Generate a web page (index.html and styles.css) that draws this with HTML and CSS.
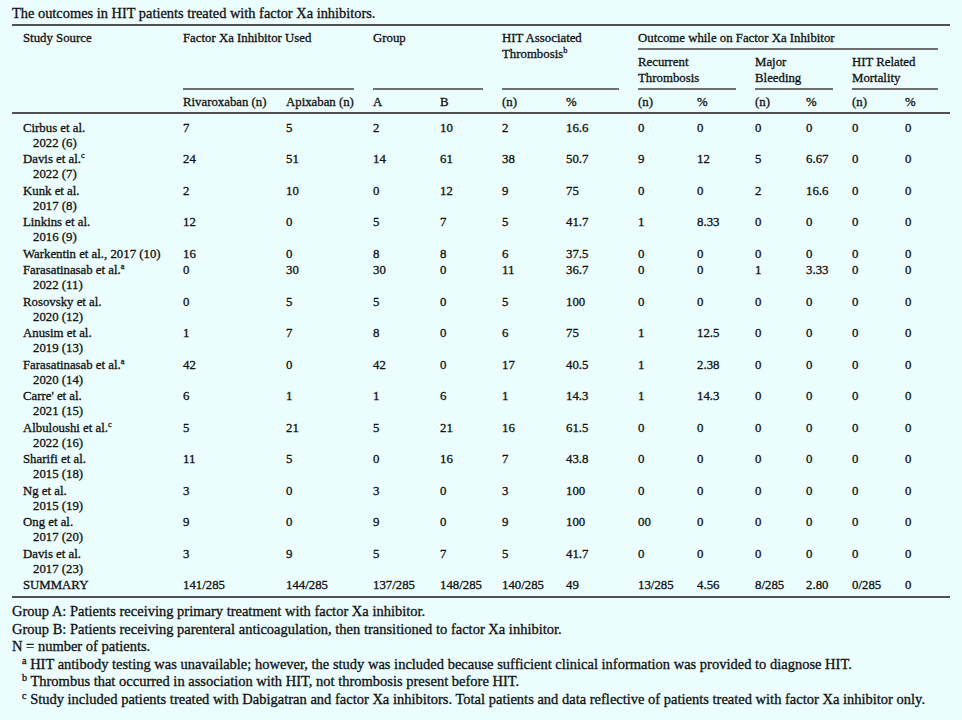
FILE: index.html
```html
<!DOCTYPE html>
<html lang="en">
<head>
<meta charset="utf-8">
<title>Factor Xa inhibitors in HIT</title>
<link rel="stylesheet" href="styles.css">
</head>
<body>
<p class="title">The outcomes in HIT patients treated with factor Xa inhibitors.</p>
<table class="tbl">
  <colgroup>
    <col class="c-study"><col class="c-riva"><col class="c-apix"><col class="c-a"><col class="c-b">
    <col class="c-hn"><col class="c-hp"><col class="c-rn"><col class="c-rp"><col class="c-mn"><col class="c-mp">
    <col class="c-dn"><col class="c-dp">
  </colgroup>
  <thead>
    <tr class="h1">
      <th rowspan="3" class="study">Study Source</th>
      <th colspan="2" rowspan="2" class="grp">Factor Xa Inhibitor Used</th>
      <th colspan="2" rowspan="2" class="grp">Group</th>
      <th colspan="2" rowspan="2" class="grp">HIT Associated<br>Thrombosis<sup>b</sup></th>
      <th colspan="6" class="grp grp-end">Outcome while on Factor Xa Inhibitor</th>
    </tr>
    <tr class="h2">
      <th colspan="2" class="grp">Recurrent<br>Thrombosis</th>
      <th colspan="2" class="grp">Major<br>Bleeding</th>
      <th colspan="2" class="grp grp-end">HIT Related<br>Mortality</th>
    </tr>
    <tr class="h3">
      <th>Rivaroxaban (n)</th><th>Apixaban (n)</th><th>A</th><th>B</th>
      <th>(n)</th><th>%</th><th>(n)</th><th>%</th><th>(n)</th><th>%</th><th>(n)</th><th>%</th>
    </tr>
  </thead>
  <tbody>
    <tr><td class="study">Cirbus et al.<br>2022 (6)</td><td>7</td><td>5</td><td>2</td><td>10</td><td>2</td><td>16.6</td><td>0</td><td>0</td><td>0</td><td>0</td><td>0</td><td>0</td></tr>
    <tr><td class="study">Davis et al.<sup>c</sup><br>2022 (7)</td><td>24</td><td>51</td><td>14</td><td>61</td><td>38</td><td>50.7</td><td>9</td><td>12</td><td>5</td><td>6.67</td><td>0</td><td>0</td></tr>
    <tr><td class="study">Kunk et al.<br>2017 (8)</td><td>2</td><td>10</td><td>0</td><td>12</td><td>9</td><td>75</td><td>0</td><td>0</td><td>2</td><td>16.6</td><td>0</td><td>0</td></tr>
    <tr><td class="study">Linkins et al.<br>2016 (9)</td><td>12</td><td>0</td><td>5</td><td>7</td><td>5</td><td>41.7</td><td>1</td><td>8.33</td><td>0</td><td>0</td><td>0</td><td>0</td></tr>
    <tr><td class="study">Warkentin et al., 2017 (10)</td><td>16</td><td>0</td><td>8</td><td>8</td><td>6</td><td>37.5</td><td>0</td><td>0</td><td>0</td><td>0</td><td>0</td><td>0</td></tr>
    <tr><td class="study">Farasatinasab et al.<sup>a</sup><br>2022 (11)</td><td>0</td><td>30</td><td>30</td><td>0</td><td>11</td><td>36.7</td><td>0</td><td>0</td><td>1</td><td>3.33</td><td>0</td><td>0</td></tr>
    <tr><td class="study">Rosovsky et al.<br>2020 (12)</td><td>0</td><td>5</td><td>5</td><td>0</td><td>5</td><td>100</td><td>0</td><td>0</td><td>0</td><td>0</td><td>0</td><td>0</td></tr>
    <tr><td class="study">Anusim et al.<br>2019 (13)</td><td>1</td><td>7</td><td>8</td><td>0</td><td>6</td><td>75</td><td>1</td><td>12.5</td><td>0</td><td>0</td><td>0</td><td>0</td></tr>
    <tr><td class="study">Farasatinasab et al.<sup>a</sup><br>2020 (14)</td><td>42</td><td>0</td><td>42</td><td>0</td><td>17</td><td>40.5</td><td>1</td><td>2.38</td><td>0</td><td>0</td><td>0</td><td>0</td></tr>
    <tr><td class="study">Carre' et al.<br>2021 (15)</td><td>6</td><td>1</td><td>1</td><td>6</td><td>1</td><td>14.3</td><td>1</td><td>14.3</td><td>0</td><td>0</td><td>0</td><td>0</td></tr>
    <tr><td class="study">Albuloushi et al.<sup>c</sup><br>2022 (16)</td><td>5</td><td>21</td><td>5</td><td>21</td><td>16</td><td>61.5</td><td>0</td><td>0</td><td>0</td><td>0</td><td>0</td><td>0</td></tr>
    <tr><td class="study">Sharifi et al.<br>2015 (18)</td><td>11</td><td>5</td><td>0</td><td>16</td><td>7</td><td>43.8</td><td>0</td><td>0</td><td>0</td><td>0</td><td>0</td><td>0</td></tr>
    <tr><td class="study">Ng et al.<br>2015 (19)</td><td>3</td><td>0</td><td>3</td><td>0</td><td>3</td><td>100</td><td>0</td><td>0</td><td>0</td><td>0</td><td>0</td><td>0</td></tr>
    <tr><td class="study">Ong et al.<br>2017 (20)</td><td>9</td><td>0</td><td>9</td><td>0</td><td>9</td><td>100</td><td>00</td><td>0</td><td>0</td><td>0</td><td>0</td><td>0</td></tr>
    <tr><td class="study">Davis et al.<br>2017 (23)</td><td>3</td><td>9</td><td>5</td><td>7</td><td>5</td><td>41.7</td><td>0</td><td>0</td><td>0</td><td>0</td><td>0</td><td>0</td></tr>
    <tr class="summary"><td class="study">SUMMARY</td><td>141/285</td><td>144/285</td><td>137/285</td><td>148/285</td><td>140/285</td><td>49</td><td>13/285</td><td>4.56</td><td>8/285</td><td>2.80</td><td>0/285</td><td>0</td></tr>
  </tbody>
</table>
<div class="notes">
  <p>Group A: Patients receiving primary treatment with factor Xa inhibitor.</p>
  <p>Group B: Patients receiving parenteral anticoagulation, then transitioned to factor Xa inhibitor.</p>
  <p>N = number of patients.</p>
  <p class="fn"><sup>a</sup> HIT antibody testing was unavailable; however, the study was included because sufficient clinical information was provided to diagnose HIT.</p>
  <p class="fn"><sup>b</sup> Thrombus that occurred in association with HIT, not thrombosis present before HIT.</p>
  <p class="fn"><sup>c</sup> Study included patients treated with Dabigatran and factor Xa inhibitors. Total patients and data reflective of patients treated with factor Xa inhibitor only.</p>
</div>
</body>
</html>
```
FILE: styles.css
```css
html, body {
  margin: 0;
  background: #ebfdfd;
}
body {
  padding: 4px 12px 0;
  color: #111;
  font-family: "Liberation Serif", "Times New Roman", serif;
  -webkit-text-stroke: 0.3px #111;
}
.title {
  margin: 0 0 2px;
  font-size: 14.4px;
  line-height: 18px;
}
.tbl {
  width: 938px;
  table-layout: fixed;
  border-collapse: collapse;
  border-spacing: 0;
  font-size: 12.8px;
  border-top: 2px solid #505050;
}
.c-study { width: 171px; }
.c-riva { width: 103px; }
.c-apix { width: 87px; }
.c-a { width: 67px; }
.c-b { width: 62px; }
.c-hn { width: 64px; }
.c-hp { width: 72px; }
.c-rn { width: 59px; }
.c-rp { width: 58px; }
.c-mn { width: 51px; }
.c-mp { width: 46px; }
.c-dn { width: 53px; }
.c-dp { width: 45px; }

.tbl th {
  font-weight: normal;
  text-align: left;
  vertical-align: top;
  line-height: 16px;
  padding: 0;
}
.tbl thead {
  border-bottom: 2px solid #505050;
}
.tbl th.study {
  padding: 4px 0 0 11px;
}
.h1 th {
  padding-top: 4px;
  padding-bottom: 4px;
}
.h2 th {
  padding-top: 3.5px;
  padding-bottom: 4px;
}
.h3 th {
  padding-top: 4px;
  padding-bottom: 2.5px;
}
.tbl th.grp {
  background: linear-gradient(#707070, #707070) left bottom / calc(100% - 19px) 2px no-repeat;
}
.tbl th.grp-end {
  background-size: calc(100% - 12px) 2px;
}
sup {
  font-size: 0.65em;
  line-height: 0;
  vertical-align: 0.55em;
}

.tbl tbody {
  border-bottom: 2px solid #505050;
}
.tbl td {
  line-height: 15px;
  padding: 0.5px 0 1px;
  vertical-align: top;
  white-space: nowrap;
}
.tbl td.study {
  padding-left: 21px;
  text-indent: -10px;
}
.tbl tbody tr:first-child td {
  padding-top: 6.5px;
}
.tbl tr.summary td {
  padding-bottom: 3px;
}

.notes {
  margin-top: 5px;
  font-size: 14.5px;
  line-height: 17.5px;
}
.notes p {
  margin: 0;
}
.notes .fn {
  padding-left: 10px;
}
.notes .fn sup {
  font-size: 0.7em;
  vertical-align: 0.5em;
}
```
